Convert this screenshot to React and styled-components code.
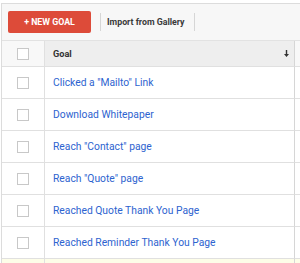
import React from 'react'
import styled, { createGlobalStyle } from 'styled-components'

const GlobalStyle = createGlobalStyle`
  body {
    margin: 0;
    background: #ffffff;
    font-family: Roboto, "Liberation Sans", Arial, sans-serif;
  }
`

const Frame = styled.div`
  margin-top: 3px;
  margin-left: 1px;
  border-top: 1px solid #dcdcdc;
  border-left: 1px solid #dcdcdc;
  height: 259px;
  overflow: hidden;
`

const Toolbar = styled.div`
  display: flex;
  align-items: center;
  height: 36px;
  padding-left: 6px;
  background: #f7f7f7;
  border-bottom: 1px solid #e2e2e2;
`

const NewButton = styled.button`
  width: 83px;
  height: 22px;
  border: none;
  border-radius: 2px;
  background: #dd4b39;
  color: #ffffff;
  font-family: inherit;
  font-size: 8.8px;
  font-weight: 700;
  padding: 0;
  cursor: pointer;
`

const Separator = styled.span`
  width: 1px;
  height: 18px;
  background: #d6d6d6;
  margin: 0 6px 0 9px;
`

const TextButton = styled.span`
  font-size: 8.8px;
  font-weight: 700;
  color: #3a3a3a;
`

const Table = styled.div`
  display: grid;
  grid-template-columns: 43px 250px 1fr;
`

const Cell = styled.div`
  height: ${(p) => (p.$head ? 25 : 31)}px;
  display: flex;
  align-items: center;
  border-bottom: 1px solid #e0e0e0;
  background: ${(p) => (p.$head ? (p.$shade ? '#eeeeee' : '#f8f8f8') : '#ffffff')};
`

const CheckCell = styled(Cell)`
  justify-content: center;
  border-right: 1px solid #e0e0e0;
`

const MainCell = styled(Cell)`
  padding: 0 5px 0 8px;
  border-right: 1px solid #d6d6d6;
  justify-content: space-between;
`

const Checkbox = styled.span`
  display: block;
  width: 10px;
  height: 10px;
  border: 1px solid #c8c8c8;
  background: #ffffff;
`

const HeadLabel = styled.span`
  font-size: 9.2px;
  font-weight: 700;
  color: #333333;
`

const GoalLink = styled.a`
  font-size: 10.3px;
  color: #2d63cf;
  text-decoration: none;
  white-space: nowrap;
`

const Footer = styled.div`
  grid-column: 1 / -1;
  display: grid;
  grid-template-columns: 43px 250px 1fr;
  height: 10px;
  background: #fdfde8;
`

const FooterCol = styled.div`
  border-right: 1px solid ${(p) => (p.$light ? '#e0e0e0' : '#d6d6d6')};
`

const SortArrow = () => (
  <svg width="5" height="7" viewBox="0 0 5 7">
    <path d="M1.8 0h1.4v4H5L2.5 7 0 4h1.8z" fill="#333" />
  </svg>
)

const goals = [
  'Clicked a "Mailto" Link',
  'Download Whitepaper',
  'Reach "Contact" page',
  'Reach "Quote" page',
  'Reached Quote Thank You Page',
  'Reached Reminder Thank You Page',
]

export default function App() {
  return (
    <>
      <GlobalStyle />
      <Frame>
        <Toolbar>
          <NewButton>+ NEW GOAL</NewButton>
          <Separator />
          <TextButton>Import from Gallery</TextButton>
          <Separator />
        </Toolbar>
        <Table>
          <CheckCell $head>
            <Checkbox />
          </CheckCell>
          <MainCell $head $shade>
            <HeadLabel>Goal</HeadLabel>
            <SortArrow />
          </MainCell>
          <Cell $head />
          {goals.map((g) => (
            <React.Fragment key={g}>
              <CheckCell>
                <Checkbox />
              </CheckCell>
              <MainCell>
                <GoalLink href="#">{g}</GoalLink>
              </MainCell>
              <Cell />
            </React.Fragment>
          ))}
          <Footer>
            <FooterCol $light />
            <FooterCol />
            <div />
          </Footer>
        </Table>
      </Frame>
    </>
  )
}
